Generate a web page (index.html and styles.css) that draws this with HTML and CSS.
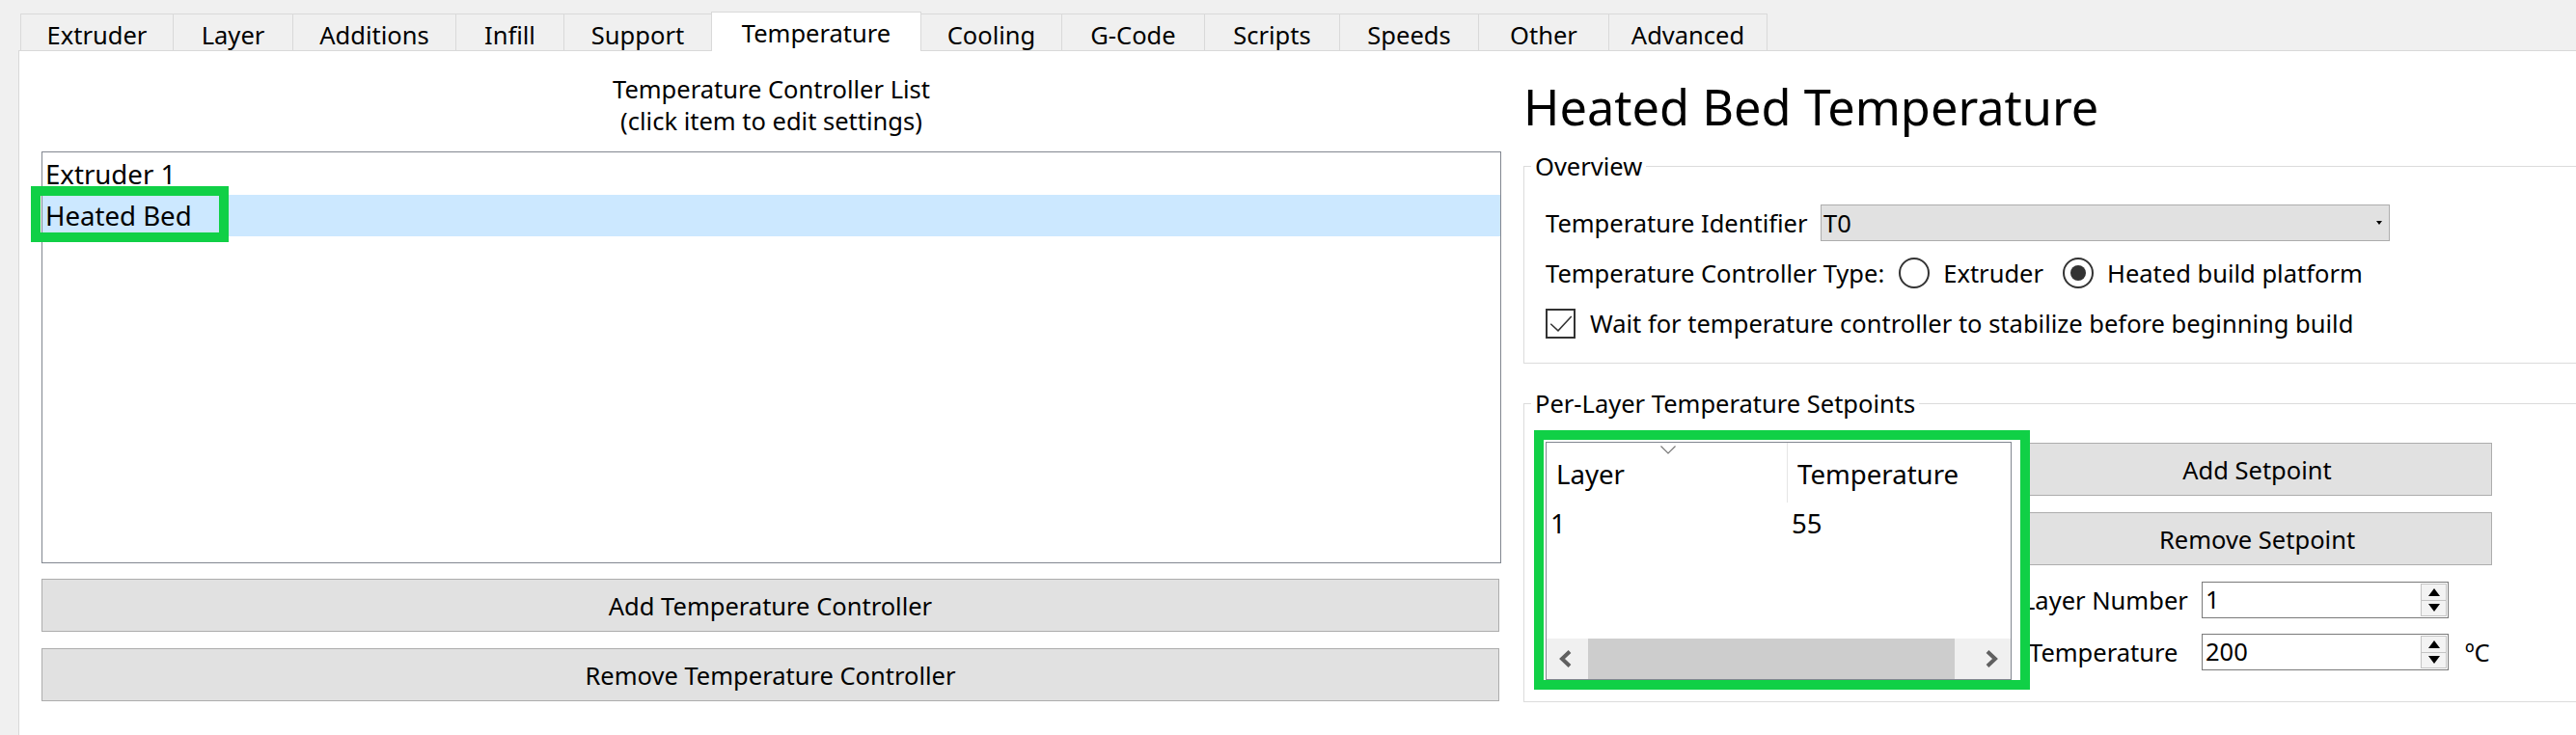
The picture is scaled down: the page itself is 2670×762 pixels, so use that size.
FILE: index.html
```html
<!DOCTYPE html>
<html>
<head>
<meta charset="utf-8">
<title>Temperature</title>
<link rel="stylesheet" href="styles.css">
</head>
<body>
<div class="app">
  <div class="tabbar">
    <div class="tab">Extruder</div>
    <div class="tab">Layer</div>
    <div class="tab">Additions</div>
    <div class="tab">Infill</div>
    <div class="tab">Support</div>
    <div class="tab active">Temperature</div>
    <div class="tab">Cooling</div>
    <div class="tab">G-Code</div>
    <div class="tab">Scripts</div>
    <div class="tab">Speeds</div>
    <div class="tab">Other</div>
    <div class="tab">Advanced</div>
  </div>
  <div class="pane">
    <div class="left-col">
      <div class="list-title">Temperature Controller List<br>(click item to edit settings)</div>
      <div class="listbox">
        <div class="list-item">Extruder 1</div>
        <div class="list-item selected">Heated Bed</div>
      </div>
      <button class="btn btn-wide btn-add">Add Temperature Controller</button>
      <button class="btn btn-wide btn-remove">Remove Temperature Controller</button>
    </div>
    <div class="right-col">
      <h1 class="heading">Heated Bed Temperature</h1>
      <fieldset class="group group-overview">
        <legend class="group-title">Overview</legend>
        <div class="group-body">
          <div class="form-row row-ident">
            <span class="ident-label">Temperature Identifier</span>
            <div class="combo">
              <span class="combo-text">T0</span>
              <svg class="combo-arrow" width="6" height="4" viewBox="0 0 6 4"><polygon points="0,0 6,0 3,4" fill="#000"/></svg>
            </div>
          </div>
          <div class="form-row row-type">
            <span class="type-label">Temperature Controller Type:</span>
            <span class="radio"></span>
            <span class="radio-text">Extruder</span>
            <span class="radio checked"><span class="radio-dot"></span></span>
            <span class="radio-text">Heated build platform</span>
          </div>
          <div class="form-row row-check">
            <span class="checkbox">
              <svg width="29" height="29" viewBox="0 0 29 29"><polyline points="3.5,14.8 11.8,22.4 26.6,6.4" fill="none" stroke="#333" stroke-width="1.6"/></svg>
            </span>
            <span class="check-text">Wait for temperature controller to stabilize before beginning build</span>
          </div>
        </div>
      </fieldset>
      <fieldset class="group group-setpoints">
        <legend class="group-title">Per-Layer Temperature Setpoints</legend>
        <div class="group-body setpoints-body">
          <div class="table">
            <div class="thead">
              <div class="th th-layer">Layer
                <svg class="sort-ind" width="16" height="9" viewBox="0 0 16 9"><polyline points="0.5,0.5 8,8 15.5,0.5" fill="none" stroke="#777" stroke-width="1.2"/></svg>
              </div>
              <div class="th th-temp">Temperature</div>
            </div>
            <div class="tr">
              <div class="td td-layer">1</div>
              <div class="td td-temp">55</div>
            </div>
            <div class="tbody-space"></div>
            <div class="hscroll">
              <div class="hs-left">
                <svg width="14" height="18" viewBox="0 0 14 18"><polyline points="12,1.5 4,9 12,16.5" fill="none" stroke="#606060" stroke-width="4"/></svg>
              </div>
              <div class="hs-thumb"></div>
              <div class="hs-right">
                <svg width="14" height="18" viewBox="0 0 14 18"><polyline points="2,1.5 10,9 2,16.5" fill="none" stroke="#606060" stroke-width="4"/></svg>
              </div>
            </div>
          </div>
          <div class="sp-controls">
            <button class="btn btn-sp btn-sp-add">Add Setpoint</button>
            <button class="btn btn-sp btn-sp-remove">Remove Setpoint</button>
            <div class="spin-row spin-row-layer">
              <span class="spin-label spin-label-layer">Layer Number</span>
              <div class="spin">
                <span class="spin-text">1</span>
                <div class="spin-btns">
                  <div class="spin-btn"><svg width="12" height="8" viewBox="0 0 12 8"><polygon points="6,0 12,8 0,8" fill="#000"/></svg></div>
                  <div class="spin-btn spin-down"><svg width="12" height="8" viewBox="0 0 12 8"><polygon points="0,0 12,0 6,8" fill="#000"/></svg></div>
                </div>
              </div>
            </div>
            <div class="spin-row spin-row-temp">
              <span class="spin-label spin-label-temp">Temperature</span>
              <div class="spin">
                <span class="spin-text">200</span>
                <div class="spin-btns">
                  <div class="spin-btn"><svg width="12" height="8" viewBox="0 0 12 8"><polygon points="6,0 12,8 0,8" fill="#000"/></svg></div>
                  <div class="spin-btn spin-down"><svg width="12" height="8" viewBox="0 0 12 8"><polygon points="0,0 12,0 6,8" fill="#000"/></svg></div>
                </div>
              </div>
              <span class="unit">ºC</span>
            </div>
          </div>
        </div>
      </fieldset>
    </div>
  </div>
  <div class="highlight hl-list"></div>
  <div class="highlight hl-table"></div>
</div>
</body>
</html>
```

FILE: styles.css
```css
html, body {
  margin: 0;
  height: 762px;
  overflow: hidden;
}
body {
  background: #f0f0f0;
  font-family: "Noto Sans", "Open Sans", sans-serif;
  font-size: 25.5px;
  color: #000;
}
.app {
  position: relative;
  height: 762px;
  display: flex;
  flex-direction: column;
  overflow: hidden;
}

/* Tabs */
.tabbar {
  display: flex;
  align-items: flex-end;
  height: 52px;
  padding-left: 21px;
  box-sizing: border-box;
  position: relative;
  z-index: 2;
  flex-shrink: 0;
}
.tab {
  height: 38px;
  box-sizing: border-box;
  border: 1px solid #d9d9d9;
  border-bottom: 0;
  margin-right: -1px;
  background: #f0f0f0;
  text-align: center;
  padding-top: 6px;
  line-height: 30px;
  white-space: nowrap;
}
.tab:nth-child(1) { width: 159px; }
.tab:nth-child(2) { width: 125px; }
.tab:nth-child(3) { width: 170px; }
.tab:nth-child(4) { width: 113px; }
.tab:nth-child(5) { width: 154px; }
.tab:nth-child(6) { width: 218px; }
.tab:nth-child(7) { width: 147px; }
.tab:nth-child(8) { width: 149px; }
.tab:nth-child(9) { width: 141px; }
.tab:nth-child(10) { width: 145px; }
.tab:nth-child(11) { width: 136px; }
.tab:nth-child(12) { width: 165px; }
.tab.active {
  height: 41px;
  margin-bottom: -1px;
  background: #fff;
  position: relative;
  z-index: 3;
}

/* Pane */
.pane {
  flex: 1;
  min-height: 0;
  background: #fff;
  border-top: 1px solid #d9d9d9;
  border-left: 1px solid #d9d9d9;
  margin-left: 19px;
  display: flex;
  padding-left: 23px;
  gap: 23px;
}
.left-col {
  width: 1513px;
  flex-shrink: 0;
}
.list-title {
  text-align: center;
  line-height: 33px;
  margin-top: 23px;
}
.listbox {
  margin-top: 15px;
  height: 427px;
  box-sizing: border-box;
  border: 1px solid #828790;
  padding-top: 1px;
  font-size: 27.6px;
}
.list-item {
  height: 43px;
  line-height: 43px;
  padding-left: 3px;
  white-space: nowrap;
}
.list-item.selected {
  background: #cce8ff;
}
.btn {
  font-family: inherit;
  font-size: 25.5px;
  color: #000;
  background: #e1e1e1;
  border: 1px solid #adadad;
  box-sizing: border-box;
  display: block;
  padding: 0;
  margin: 0;
  text-align: center;
}
.btn-wide {
  width: 1511px;
  height: 55px;
}
.btn-add { margin-top: 16px; }
.btn-remove { margin-top: 17px; }

/* Right column */
.right-col {
  width: 1120px;
  flex-shrink: 0;
}
.heading {
  margin: 28px 0 0 0;
  font-size: 50.5px;
  font-weight: normal;
  line-height: 60px;
  white-space: nowrap;
}
.group {
  margin: 0;
  padding: 0;
  border: 1px solid #dcdcdc;
  min-width: 0;
}
.group-overview { margin-top: 14px; }
.group-setpoints { margin-top: 24px; }
.group-title {
  padding: 0 4px;
  margin-left: 7px;
  line-height: 34px;
  white-space: nowrap;
}
.group-body {
  padding: 23px 0 24px 22px;
}
.form-row {
  display: flex;
  align-items: center;
  white-space: nowrap;
}
.row-ident { height: 38px; }
.row-type { height: 34px; margin-top: 16px; line-height: 34px; }
.row-check { height: 34px; margin-top: 18px; line-height: 34px; }
.ident-label {
  width: 285px;
  flex-shrink: 0;
  line-height: 34px;
}
.combo {
  width: 590px;
  height: 38px;
  box-sizing: border-box;
  border: 1px solid #adadad;
  background: #e1e1e1;
  display: flex;
  align-items: center;
  justify-content: space-between;
  padding: 0 7px 0 2px;
  line-height: 34px;
}
.combo-arrow { display: block; }
.radio {
  width: 32px;
  height: 32px;
  box-sizing: border-box;
  border: 2px solid #333;
  border-radius: 50%;
  display: flex;
  align-items: center;
  justify-content: center;
  flex-shrink: 0;
}
.type-label + .radio { margin-left: 15px; }
.radio-text { margin-left: 14px; }
.radio-text + .radio { margin-left: 20px; }
.radio-dot {
  width: 16px;
  height: 16px;
  border-radius: 50%;
  background: #333;
}
.checkbox {
  width: 31px;
  height: 31px;
  box-sizing: border-box;
  border: 2px solid #333;
  display: flex;
  align-items: center;
  justify-content: center;
  flex-shrink: 0;
}
.checkbox svg { display: block; }
.check-text { margin-left: 15px; }

/* Setpoints */
.setpoints-body {
  display: flex;
  align-items: flex-start;
  gap: 11px;
  padding-bottom: 22px;
}
.table {
  width: 483px;
  height: 247px;
  box-sizing: border-box;
  border: 1px solid #828790;
  display: flex;
  flex-direction: column;
  font-size: 27.6px;
  flex-shrink: 0;
}
.thead {
  height: 62px;
  display: flex;
  flex-shrink: 0;
}
.th {
  box-sizing: border-box;
  padding: 12px 0 0 10px;
  line-height: 40px;
  white-space: nowrap;
}
.th-layer {
  width: 250px;
  border-right: 1px solid #e5e5e5;
  position: relative;
}
.th-temp { flex: 1; }
.sort-ind {
  position: absolute;
  left: 118px;
  top: 3px;
  display: block;
}
.tr {
  display: flex;
  height: 41px;
  padding-top: 1px;
  line-height: 40px;
}
.td { box-sizing: border-box; padding-left: 4px; }
.td-layer { width: 250px; }
.td-temp { flex: 1; padding-left: 4px; }
.tbody-space { flex: 1; }
.hscroll {
  height: 42px;
  display: flex;
  background: #f0f0f0;
  flex-shrink: 0;
}
.hs-left {
  width: 43px;
  display: flex;
  align-items: center;
  padding-left: 12px;
  box-sizing: border-box;
}
.hs-thumb {
  width: 380px;
  background: #cdcdcd;
}
.hs-right {
  flex: 1;
  display: flex;
  align-items: center;
  justify-content: flex-end;
  padding-right: 12px;
}
.hs-left svg, .hs-right svg { display: block; }
.sp-controls {
  width: 487px;
  margin-top: 1px;
  flex-shrink: 0;
}
.btn-sp {
  width: 487px;
  height: 55px;
}
.btn-sp-remove { margin-top: 17px; }
.spin-row {
  display: flex;
  align-items: center;
  height: 38px;
  white-space: nowrap;
  line-height: 34px;
}
.spin-row-layer { margin-top: 17px; }
.spin-row-temp { margin-top: 16px; }
.spin-label {
  width: 186px;
  box-sizing: border-box;
  flex-shrink: 0;
}
.spin-label-layer { padding-left: 0; }
.spin-label-temp { padding-left: 7px; }
.spin {
  width: 256px;
  height: 38px;
  box-sizing: border-box;
  border: 1px solid #7a7a7a;
  background: #fff;
  display: flex;
  flex-shrink: 0;
}
.spin-text {
  flex: 1;
  padding-left: 3px;
}
.spin-btns {
  width: 27px;
  box-sizing: border-box;
  margin: 1px 1px 1px 0;
  border: 1px solid #c4c4c4;
  display: flex;
  flex-direction: column;
}
.spin-btn {
  flex: 1;
  background: #f3f3f3;
  display: flex;
  align-items: center;
  justify-content: center;
}
.spin-btn svg { display: block; }
.spin-down { border-top: 1px solid #c4c4c4; }
.unit { margin-left: 17px; }

/* Annotation highlights */
.highlight {
  position: absolute;
  box-sizing: border-box;
  border: 10px solid #10d046;
  z-index: 5;
}
.hl-list {
  left: 32px;
  top: 193px;
  width: 205px;
  height: 58px;
}
.hl-table {
  left: 1590px;
  top: 446px;
  width: 514px;
  height: 269px;
}
```
